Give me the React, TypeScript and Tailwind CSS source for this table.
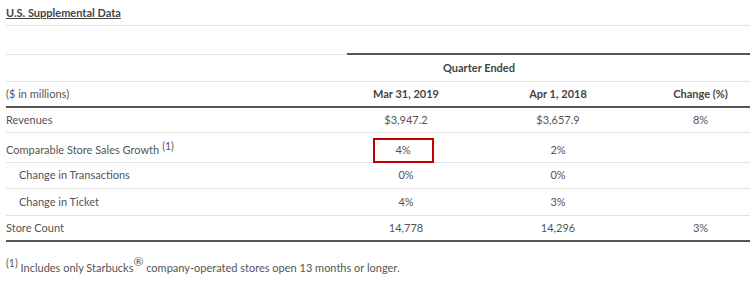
import React from "react";

const rowCls = "grid grid-cols-[341px_118px_186px_99px] items-center";

function Row({ label, a, b, c, indent, sup, boxed, h }: { label: string; a: string; b: string; c?: string; indent?: boolean; sup?: boolean; boxed?: boolean; h: string }) {
  return (
    <div className={`${rowCls} ${h} border-b border-[#e3e3e3]`}>
      <div className={indent ? "pl-[13px]" : ""}>
        {label}
        {sup && <sup className="text-[10.5px] ml-[3px] relative -top-[4px]">(1)</sup>}
      </div>
      <div className="flex justify-center">
        {boxed ? (
          <div className="w-[61px] h-[25px] border-2 border-[#c00000] flex items-center justify-center translate-x-[-3px] mt-[1px]">{a}</div>
        ) : (
          a
        )}
      </div>
      <div className="text-center">{b}</div>
      <div className="text-center">{c ?? ""}</div>
    </div>
  );
}

export default function App() {
  return (
    <div className="w-[756px] h-[281px] bg-white text-[#555] text-[11px] font-['Lato',sans-serif] pl-[6px] pr-[6px] pt-[1px]">
      <div className="h-[25px] border-b border-[#e3e3e3] flex items-center">
        <span className="font-bold underline text-[#444]">U.S. Supplemental Data</span>
      </div>
      <div className="h-[29px] flex items-end">
        <div className="w-[341px] border-b border-[#e3e3e3]" />
        <div className="flex-1 border-b-2 border-[#555]" />
      </div>
      <div className="h-[27px] border-b border-[#e3e3e3] flex items-center">
        <div className="w-[341px]" />
        <div className="w-[264px] text-center font-bold text-[#444]">Quarter Ended</div>
      </div>
      <div className={`${rowCls} h-[26px] border-b-2 border-[#555] font-bold text-[#444]`}>
        <div className="font-normal text-[#555]">($ in millions)</div>
        <div className="text-center">Mar 31, 2019</div>
        <div className="text-center">Apr 1, 2018</div>
        <div className="text-center">Change (%)</div>
      </div>
      <Row h="h-[25px]" label="Revenues" a="$3,947.2" b="$3,657.9" c="8%" />
      <Row h="h-[30px] pt-[4px]" label="Comparable Store Sales Growth" sup boxed a="4%" b="2%" />
      <Row h="h-[26px]" label="Change in Transactions" indent a="0%" b="0%" />
      <Row h="h-[27px]" label="Change in Ticket" indent a="4%" b="3%" />
      <div className={`${rowCls} h-[26px] border-b-2 border-[#555]`}>
        <div>Store Count</div>
        <div className="text-center">14,778</div>
        <div className="text-center">14,296</div>
        <div className="text-center">3%</div>
      </div>
      <div className="mt-[18px]">
        <sup className="text-[10.5px]">(1)</sup> Includes only Starbucks<sup className="text-[12px]">®</sup> company-operated stores open 13 months or longer.
      </div>
    </div>
  );
}
